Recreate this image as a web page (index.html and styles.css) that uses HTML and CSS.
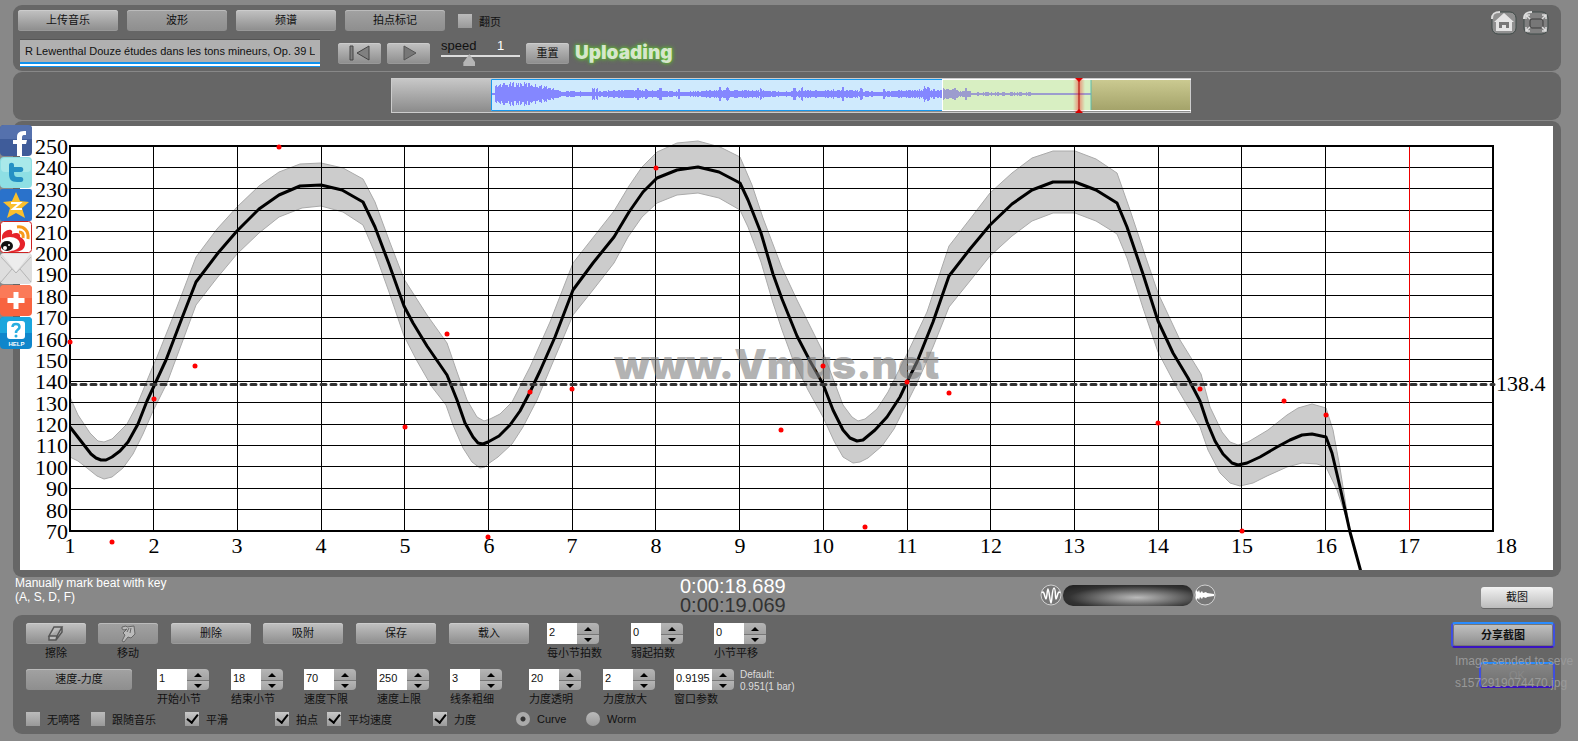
FILE: index.html
```html
<!DOCTYPE html>
<html lang="zh-CN">
	<head>
		<meta charset="utf-8">
		<title>Vmus.net</title>
		<link rel="stylesheet" href="styles.css">
	</head>
	<body>
		<!-- 分享栏 -->
		<nav class="share">
			<a href="#" aria-label="Facebook"><svg viewBox="0 0 32 32"><rect width="32" height="31" rx="4" fill="#3f5c9a"/><path d="M0 4a4 4 0 0 1 4-4h24a4 4 0 0 1 4 4v10H0z" fill="#5571ad"/><path d="M17 31V19h-4v-4h4v-3c0-5 3-6 9-6v4c-4 0-4 0-4 5h5l-1 4h-4v12z" fill="#fff"/></svg></a>
			<a href="#" aria-label="Twitter"><svg viewBox="0 0 32 32"><rect width="32" height="31" rx="4" fill="#8edfe4"/><rect x="1" y="1" width="30" height="14" rx="4" fill="#a9e9ea"/><path d="M9 8c0-3 5-3 5 0v2h7c3 0 3 5 0 5h-7c0 4 1 5 4 5h3c3 0 3 5 0 5h-4c-6 0-8-3-8-8z" fill="#2590c4"/></svg></a>
			<a href="#" aria-label="Qzone"><svg viewBox="0 0 32 32"><rect width="32" height="32" rx="2" fill="#2a72cb"/><path d="M16 3l4 9 9 1-7 6 3 10-9-5-9 5 3-10-7-6 9-1z" fill="#fbc02d"/><path d="M11 14h9l-7 6h9" fill="none" stroke="#fff" stroke-width="2"/></svg></a>
			<a href="#" aria-label="Weibo"><svg viewBox="0 0 32 32"><rect x="0.500" y="0.500" width="31" height="31" rx="3" fill="#fff" stroke="#c22"/><path d="M2 16C2 11 8 8 11 9c2 1 1 3 1 4 4-2 9-1 8 3 7 3 6 10 2 13-5 3-16 3-20-3z" fill="#e6232a"/><ellipse cx="10" cy="23" rx="10" ry="7" fill="#fff"/><ellipse cx="7" cy="25" rx="6" ry="5" fill="#111"/><circle cx="5" cy="27" r="2" fill="#fff"/><circle cx="9" cy="24" r="1" fill="#fff"/><path d="M17 6c7-1 12 4 11 12M19 11c3 0 5 2 4 6" fill="none" stroke="#f79a1c" stroke-width="3"/></svg></a>
			<a href="#" aria-label="Mail"><svg viewBox="0 0 32 32"><rect width="32" height="31" rx="4" fill="#dedede"/><path d="M2 1h28L16 19z" fill="#ededed"/><path d="M1 4L16 20 31 4M1 29l11-13M31 29L20 16" fill="none" stroke="#b5b5b5" stroke-width="1"/></svg></a>
			<a href="#" aria-label="More"><svg viewBox="0 0 32 32"><rect width="32" height="31" rx="4" fill="#f8633f"/><path d="M0 4a4 4 0 0 1 4-4h24a4 4 0 0 1 4 4v9H0z" fill="#fb7a58"/><path d="M13.500 7h5v6h6v5h-6v6h-5v-6h-6v-5h6z" fill="#fff"/></svg></a>
			<a href="#" aria-label="Help"><svg viewBox="0 0 32 32"><rect width="32" height="32" rx="4" fill="#0f86cb"/><path d="M0 4a4 4 0 0 1 4-4h24a4 4 0 0 1 4 4v12H0z" fill="#1aa6dd"/><rect x="7" y="4" width="18" height="18" rx="3" fill="#fff"/><path d="M12.500 10c0-4 7-4 7 0 0 3-3.500 2-3.500 6" fill="none" stroke="#28aee0" stroke-width="2.500"/><circle cx="16" cy="19" r="1.500" fill="#28aee0"/><text x="16.500" y="29" class="help-text">HELP</text></svg></a>
		</nav>

		<main class="page">
			<!-- 顶部工具栏 -->
			<header class="panel top">
				<div class="top-left">
					<div class="row">
						<button class="btn tab">上传音乐</button>
						<button class="btn tab on">波形</button>
						<button class="btn tab">频谱</button>
						<button class="btn tab on">拍点标记</button>
						<label class="tick flip"><input type="checkbox">翻页</label>
					</div>
					<div class="row player">
						<input class="track" type="text" aria-label="曲目" value="R Lewenthal Douze études dans les tons mineurs, Op. 39 Le festin">
						<button class="btn play" aria-label="回到开头"><svg width="24" height="16" viewBox="0 0 24 16"><path d="M2 1h3v14H2zM21 1v14L9 8z" fill="#808080" stroke="#444" stroke-width="1"/></svg></button>
						<button class="btn play" aria-label="播放"><svg width="24" height="16" viewBox="0 0 24 16"><path d="M7 1v14l12-7z" fill="#777" stroke="#555" stroke-width="1"/></svg></button>
						<div class="speed">
							<label for="speed">speed</label><output for="speed">1</output>
							<input id="speed" type="range" min="0" max="3" step="0.1" value="1">
						</div>
						<button class="btn reset">重置</button>
						<span class="uploading">Uploading</span>
					</div>
				</div>
				<div class="top-right">
					<button class="icon-btn" aria-label="首页"><svg width="26" height="24" viewBox="0 0 26 24"><rect x="1" y="1" width="24" height="22" rx="6" fill="#909090" stroke="#3f4a48"/><path d="M1 8c0-5 2-7 8-7" fill="none" stroke="#ddd" stroke-width="2"/><path d="M13 2l10 9h-2v9H5v-9H3z" fill="#e4e4e4"/><path d="M8 11h10v6h-3v-3h-4v3H8z" fill="#777"/></svg></button>
					<button class="icon-btn" aria-label="全屏"><svg width="26" height="24" viewBox="0 0 26 24"><rect x="1" y="1" width="24" height="22" rx="6" fill="#808080" stroke="#3f4a48"/><path d="M1 8c0-5 2-7 8-7" fill="none" stroke="#ddd" stroke-width="2"/><rect x="7" y="8" width="13" height="9" rx="2" fill="#777" stroke="#3c3c3c"/><path d="M3 8V4h4M3 4l4 4M19 4h4v4M23 4l-4 4M3 16v4h4M3 20l4-4M23 16v4h-4M23 20l-4-4" fill="none" stroke="#ddd" stroke-width="1.500"/></svg></button>
				</div>
			</header>

			<!-- 波形 -->
			<section class="panel wave">
				<svg id="wave" width="800" height="35" viewBox="0 0 800 35">
					<defs>
						<linearGradient id="gray" x1="0" y1="0" x2="0" y2="1"><stop offset="0" stop-color="#c8c8c8"/><stop offset="1" stop-color="#8a8a8a"/></linearGradient>
						<linearGradient id="olive" x1="0" y1="0" x2="0" y2="1"><stop offset="0" stop-color="#cccb92"/><stop offset="1" stop-color="#a3a269"/></linearGradient>
						<linearGradient id="glow"><stop offset="0" stop-color="#f00" stop-opacity="0"/><stop offset="0.500" stop-color="#f00" stop-opacity="0.400"/><stop offset="1" stop-color="#f00" stop-opacity="0"/></linearGradient>
					</defs>
					<rect x="0.500" y="0.500" width="799" height="34" fill="url(#gray)" stroke="#ccc"/>
					<rect x="100" y="1" width="451" height="32" fill="#cfeafd"/>
					<rect x="551" y="1" width="149" height="32" fill="#d8efc2"/>
					<rect x="700" y="1" width="99" height="32" fill="url(#olive)"/>
					<path id="wave-shape" fill="#8487ff"/>
					<path id="wave-tail" fill="#9c9cce"/>
					<path d="M551 1.500H100.500v31H551" fill="none" stroke="#1797ec"/>
					<path d="M551.500 1v32M551 1.500h249M551 32.500h249" fill="none" stroke="#fff"/>
					<path d="M700 2v30" stroke="#5bbcae"/>
					<rect x="682" y="1" width="12" height="33" fill="url(#glow)"/>
					<path d="M688 1v33" stroke="#a00" stroke-width="1"/>
					<path d="M684 0h8l-4 4zM684 35h8l-4-4z" fill="#d00"/>
				</svg>
			</section>

			<!-- 速度曲线 -->
			<section class="panel graph">
				<svg id="chart" class="chart" viewBox="20 126 1533 444"></svg>
			</section>

			<!-- 时间和缩放 -->
			<section class="strip">
				<p class="hint">Manually mark beat with key<br>(A, S, D, F)</p>
				<div class="times"><time class="now">0:00:18.689</time><time class="total">0:00:19.069</time></div>
				<div class="zoom">
					<svg width="22" height="24" viewBox="0 0 22 24"><circle cx="11" cy="12" r="10" fill="#777" stroke="#d0d0d0"/><path d="M2 10c2-4 3 6 4 6S7 6 8 6s2 14 3 14S12 5 14 5s1 11 2 11 2-10 4-6" fill="none" stroke="#fff" stroke-width="1.500"/></svg>
					<span class="zoom-bar"></span>
					<svg width="22" height="24" viewBox="0 0 22 24"><circle cx="11" cy="12" r="10" fill="#777" stroke="#d0d0d0"/><path d="M2 7l2 2 1-2 1 3 2-2 1 2 3-1 1 1 7 1v2l-7 1-1 1-3-1-1 2-2-2-1 3-1-2-2 2z" fill="#fff"/></svg>
				</div>
				<button class="btn light shot">截图</button>
			</section>

			<!-- 控制面板 -->
			<section class="panel controls">
				<div class="grid tools">
					<div class="field"><button class="btn small" id="erase" aria-label="擦除"><svg width="18" height="16" viewBox="0 0 18 16"><path d="M7 1h8l-5 9H2zM2 10v4h7l6-8V1M10 10l-1 4" fill="#bbb" stroke="#555" stroke-width="1.500"/></svg></button><label class="mid" for="erase">擦除</label></div>
					<div class="field"><button class="btn small on" id="move" aria-label="移动"><svg width="18" height="18" viewBox="0 0 18 18"><path d="M3 2l4-1 1 1 7-1 1 8-4 4-3-1-4 5-2-1 3-6-2-2 4-4-3 1-2-1z" fill="#bbb" stroke="#666" stroke-width="1"/><path d="M8 7l2-4M11 8l1-5" stroke="#666"/></svg></button><label class="mid" for="move">移动</label></div>
					<button class="btn wide">删除</button>
					<button class="btn wide">吸附</button>
					<button class="btn wide">保存</button>
					<button class="btn wide">载入</button>
					<div class="field"><span class="spin"><input id="beats" type="text" value="2"><button class="up" aria-label="加"></button><button class="down" aria-label="减"></button></span><label for="beats">每小节拍数</label></div>
					<div class="field"><span class="spin"><input id="pickup" type="text" value="0"><button class="up" aria-label="加"></button><button class="down" aria-label="减"></button></span><label for="pickup">弱起拍数</label></div>
					<div class="field"><span class="spin"><input id="shift" type="text" value="0"><button class="up" aria-label="加"></button><button class="down" aria-label="减"></button></span><label for="shift">小节平移</label></div>
				</div>
				<div class="grid params">
					<button class="btn mode on">速度-力度</button>
					<div class="field"><span class="spin"><input id="from" type="text" value="1"><button class="up" aria-label="加"></button><button class="down" aria-label="减"></button></span><label for="from">开始小节</label></div>
					<div class="field"><span class="spin"><input id="to" type="text" value="18"><button class="up" aria-label="加"></button><button class="down" aria-label="减"></button></span><label for="to">结束小节</label></div>
					<div class="field"><span class="spin"><input id="low" type="text" value="70"><button class="up" aria-label="加"></button><button class="down" aria-label="减"></button></span><label for="low">速度下限</label></div>
					<div class="field"><span class="spin"><input id="high" type="text" value="250"><button class="up" aria-label="加"></button><button class="down" aria-label="减"></button></span><label for="high">速度上限</label></div>
					<div class="field"><span class="spin"><input id="line" type="text" value="3"><button class="up" aria-label="加"></button><button class="down" aria-label="减"></button></span><label for="line">线条粗细</label></div>
					<div class="field"><span class="spin"><input id="alpha" type="text" value="20"><button class="up" aria-label="加"></button><button class="down" aria-label="减"></button></span><label for="alpha">力度透明</label></div>
					<div class="field"><span class="spin"><input id="scale" type="text" value="2"><button class="up" aria-label="加"></button><button class="down" aria-label="减"></button></span><label for="scale">力度放大</label></div>
					<div class="field"><span class="spin long"><input id="window" type="text" value="0.9195"><button class="up" aria-label="加"></button><button class="down" aria-label="减"></button></span><label for="window">窗口参数</label></div>
					<p class="default">Default:<br>0.951(1 bar)</p>
				</div>
				<div class="grid options">
					<label class="tick"><input type="checkbox">无嘀嗒</label>
					<label class="tick"><input type="checkbox">跟随音乐</label>
					<label class="tick"><input type="checkbox" checked>平滑</label>
					<label class="tick"><input type="checkbox" checked>拍点</label>
					<label class="tick"><input type="checkbox" checked>平均速度</label>
					<label class="tick"><input type="checkbox" checked>力度</label>
					<label class="tick"><input type="radio" name="view" checked>Curve</label>
					<label class="tick"><input type="radio" name="view">Worm</label>
				</div>

				<div class="send">
					<button class="btn focus send-btn">分享截图</button>
					<button class="btn focus ok-btn">OK</button>
					<p class="message">Image sended to seve<br>s1572919074470.jpg</p>
				</div>
			</section>
		</main>
		<script src="chart.js"></script>
	</body>
</html>
```
FILE: styles.css
```css
* {
	box-sizing: border-box;
}

body {
	position: relative;
	margin: 0;
	min-height: 100vh;
	overflow: hidden;
	background-color: #888;
	color: #111;
	font-family: "Liberation Sans", "Noto Sans CJK SC", sans-serif;
	font-size: 11px;
}

p {
	margin: 0;
}

button,
input {
	margin: 0;
	padding: 0;
	font-family: inherit;
	font-size: 11px;
}

.page {
	display: flex;
	flex-direction: column;
	gap: 1px;
	padding: 5px 17px 7px 13px;
}

.panel {
	background-color: #666;
	border-radius: 9px;
}

/* 按钮 */
.btn {
	display: flex;
	align-items: center;
	justify-content: center;
	height: 21px;
	border: 0;
	border-radius: 3px;
	background: linear-gradient(#c2c2c2, #8c8c8c);
	box-shadow: inset 0 1px #ccc, inset 0 -1px #999;
	color: #111;
	line-height: 21px;
}

.btn.on {
	background: linear-gradient(#a2a2a2, #8e8e8e);
	box-shadow: inset 0 1px #bbb;
}

.btn.light {
	background: linear-gradient(#f2f2f2, #bcbcbc);
	box-shadow: 0 1px #666;
}

/* 分享栏 */
.share {
	position: absolute;
	left: 0;
	top: 125px;
	z-index: 2;
	width: 32px;
}

.share a,
.share svg {
	display: block;
	width: 32px;
	height: 32px;
}

.help-text {
	fill: #fff;
	font-size: 6px;
	font-weight: bold;
	text-anchor: middle;
}

/* 顶部 */
.top {
	display: flex;
	justify-content: space-between;
	height: 66px;
	padding: 5px 12px 0 5px;
}

.row {
	display: flex;
	align-items: center;
	gap: 9px;
}

.tab {
	width: 100px;
}

.flip {
	margin-left: 4px;
}

.player {
	gap: 6px;
	margin-top: 7px;
	padding-left: 2px;
	height: 30px;
}

.track {
	width: 300px;
	height: 28px;
	margin-right: 12px;
	padding: 0 5px 5px;
	border: 0;
	border-top: 1px solid #555;
	background: linear-gradient(#b0b0b0 22px, #0f92ee 22px, #0f92ee 24px, #fff 24px, #fff 26px, #0f92ee 26px);
	color: #111;
}

.play,
.reset {
	width: 43px;
}

.speed {
	display: grid;
	grid-template-columns: 56px auto;
	width: 79px;
	margin-left: 5px;
	font-size: 13px;
	line-height: 14px;
}

.speed output {
	color: #fff;
}

.speed input {
	grid-column: 1 / 3;
	width: 79px;
	height: 14px;
	background: none;
	appearance: none;
}

.speed input::-webkit-slider-runnable-track {
	height: 14px;
	background: linear-gradient(#ddd, #ddd) 0 2px / 100% 2px no-repeat;
}

.speed input::-webkit-slider-thumb {
	appearance: none;
	width: 12px;
	height: 12px;
	margin-top: 1px;
	background: #b5b5b5;
	clip-path: polygon(50% 0, 100% 70%, 100% 100%, 0 100%, 0 70%);
}

.uploading {
	color: #d6e6cc;
	font-family: Inter, sans-serif;
	font-size: 19px;
	font-weight: 900;
	line-height: 24px;
	text-shadow: 0 0 3px #5cbf2c, 0 0 5px #5cbf2c;
}

.top-right {
	display: flex;
	gap: 6px;
	padding-top: 1px;
}

.icon-btn {
	width: 26px;
	height: 24px;
	border: 0;
	background: none;
}

.icon-btn svg {
	display: block;
}

/* 波形和曲线 */
.wave {
	display: flex;
	justify-content: center;
	height: 48px;
	padding: 6px 0 0 8px;
}

.graph {
	padding: 5px 8px 7px 7px;
}

.chart {
	display: block;
	width: 100%;
	height: auto;
	background-color: #fff;
	font-family: "Liberation Serif", serif;
	font-size: 22px;
}

.band {
	fill: #ccc;
	stroke: #aaa;
}

.grid-line {
	stroke: #000;
	shape-rendering: crispEdges;
}

.frame {
	fill: none;
	stroke: #000;
	stroke-width: 2;
}

.now-line {
	stroke: #e00;
	shape-rendering: crispEdges;
}

.curve {
	fill: none;
	stroke: #000;
	stroke-width: 3;
	stroke-linejoin: round;
}

.average {
	stroke: #333;
	stroke-width: 3;
	stroke-dasharray: 5 5;
	stroke-linecap: round;
}

.beat {
	fill: #f00;
}

.watermark {
	fill: #808080;
	fill-opacity: 0.6;
	font-family: Inter, sans-serif;
	font-size: 41px;
	font-weight: 900;
}

.y-text {
	text-anchor: end;
}

.x-text {
	text-anchor: middle;
}

/* 时间和缩放 */
.strip {
	display: grid;
	grid-template-columns: 665px 360px 1fr auto;
	height: 36px;
	padding: 0 8px 0 2px;
	color: #fff;
}

.hint {
	margin-top: -2px;
	font-size: 12px;
	line-height: 14px;
}

.times {
	margin-top: -1px;
	font-size: 20px;
	line-height: 19px;
}

.times time {
	display: block;
}

.total {
	color: #333;
}

.zoom {
	display: flex;
	align-items: center;
	gap: 1px;
	height: 34px;
}

.zoom-bar {
	width: 130px;
	height: 21px;
	border-radius: 10px;
	background: radial-gradient(ellipse at 57% 60%, #bbb, #888 25%, #333 65%, #1c1c1c);
}

.shot {
	width: 72px;
	margin-top: 9px;
}

/* 控制面板 */
.controls {
	position: relative;
	height: 119px;
	padding: 8px 13px 0;
}

.grid {
	display: grid;
	align-items: start;
}

.tools {
	grid-template-columns: 72px 73px 92px 93px 93px 98px 84px 83px auto;
	height: 46px;
}

.params {
	grid-template-columns: 131px 74px repeat(3, 73px) 79px 74px 71px 66px auto;
	height: 42px;
}

.options {
	grid-template-columns: 65px 94px 90px 52px 106px 83px 70px auto;
	height: 16px;
}

.field {
	display: flex;
	flex-direction: column;
	align-items: flex-start;
}

.field label {
	line-height: 18px;
}

.field .mid {
	width: 60px;
	text-align: center;
}

.small {
	width: 60px;
}

.wide {
	width: 80px;
}

.mode {
	width: 106px;
}

.spin {
	display: grid;
	grid-template-columns: 30px 22px;
	grid-template-rows: 11px 10px;
}

.spin.long {
	grid-template-columns: 38px 22px;
}

.spin input {
	grid-row: 1 / 3;
	width: 100%;
	height: 21px;
	padding: 0 0 4px 2px;
	border: 0;
	background-color: #fff;
	color: #111;
}

.spin button {
	display: flex;
	align-items: center;
	justify-content: center;
	border: 0;
	background: linear-gradient(#b5b5b5, #a2a2a2);
	border-radius: 0 4px 0 0;
}

.spin .down {
	border-top: 1px solid #777;
	border-radius: 0 0 4px 0;
}

.spin button::before {
	content: "";
	border: 4px solid transparent;
	border-top-width: 0;
	border-bottom-color: #000;
}

.spin .down::before {
	border-width: 4px 4px 0;
	border-top-color: #000;
}

.default {
	color: #ddd;
	font-size: 10px;
	line-height: 12px;
}

.tick {
	display: flex;
	align-items: center;
	gap: 7px;
	height: 16px;
	white-space: nowrap;
}

.tick input {
	width: 14px;
	height: 14px;
	appearance: none;
	background: linear-gradient(#bbb, #999);
}

.tick input[type="checkbox"]:checked {
	position: relative;
	background: linear-gradient(#c8c8c8, #999);
}

.tick input[type="checkbox"]:checked::after {
	content: "";
	position: absolute;
	left: 4px;
	top: 0;
	width: 5px;
	height: 9px;
	border: solid #000;
	border-width: 0 2px 2px 0;
	transform: rotate(38deg);
}

.tick input[type="radio"] {
	border-radius: 50%;
}

.tick input[type="radio"]:checked {
	background: radial-gradient(circle, #333 2px, #aaa 3px);
}

/* 提示信息浮在按钮上面 */
.send {
	position: absolute;
	top: 7px;
	right: 6px;
	display: flex;
	flex-direction: column;
	align-items: flex-end;
	gap: 14px;
	width: 104px;
}

.focus {
	height: 26px;
	border: 2px solid;
	border-color: #2a8cff #3f4fe0 #3a14c0;
	border-radius: 4px;
	box-shadow: inset 0 0 0 1px #777;
}

.send-btn {
	width: 104px;
	font-weight: bold;
}

.ok-btn {
	width: 76px;
	background: linear-gradient(#858585, #707070);
	color: #888;
}

.message {
	position: absolute;
	left: 4px;
	top: 28px;
	color: #999;
	font-size: 12px;
	line-height: 22px;
	white-space: nowrap;
}
```
FILE: chart.js
```js
var NS = 'http://www.w3.org/2000/svg';
var chart = document.getElementById('chart');

var LEFT = 70, TOP = 146, RIGHT = 1493, BOTTOM = 531;
var BAR = (RIGHT - LEFT) / 17;
var STEP = (BOTTOM - TOP) / 18;

function add(tag, attrs, text) {
	var el = document.createElementNS(NS, tag);
	for (var key in attrs) {
		el.setAttribute(key, attrs[key]);
	}
	if (text !== undefined) {
		el.textContent = text;
	}
	chart.appendChild(el);
}

function line(cls, x1, y1, x2, y2) {
	add('line', { 'class': cls, x1: x1, y1: y1, x2: x2, y2: y2 });
}

// 力度带的上下边界
var upper = '70,397 78,415 90,433 98,441 104,442 112,439 127,424 137,405 153,366 157,357 177,307 196,257 217,229 237,207 259,186 279,172 300,164 321,163 343,168 363,179 375,202 389,240 404,279 427,315 447,343 457,372 467,400 477,417 484,421 490,419 500,414 512,402 530,367 550,322 573,263 614,211 629,186 642,167 657,152 677,143 698,141 720,147 740,157 752,185 763,218 782,268 797,300 823,352 843,405 852,417 858,421 865,419 877,409 888,392 907,354 927,312 949,246 970,219 990,193 1012,173 1032,158 1053,151 1075,151 1096,159 1117,173 1130,210 1145,255 1158,293 1180,340 1201,374 1210,407 1222,432 1230,442 1238,445 1248,442 1268,430 1287,415 1298,408 1312,404 1326,408 1333,430 1340,468 1350,531';
var lower = '70,457 78,461 87,468 97,476 104,479 112,477 123,468 133,454 143,434 153,411 167,383 183,340 196,305 217,278 237,254 259,233 279,217 302,208 321,206 343,212 363,225 375,253 389,292 404,336 417,361 432,387 446,405 453,425 463,448 472,462 480,468 485,467 488,464 498,457 512,444 523,427 537,400 553,362 573,315 593,290 614,263 628,237 642,217 657,203 677,195 698,193 719,198 740,210 748,227 761,262 773,303 782,330 793,360 808,390 823,417 834,441 843,457 853,463 860,462 868,458 882,446 894,429 900,417 917,383 933,347 949,307 970,281 990,256 1012,236 1032,221 1053,213 1075,213 1096,221 1117,234 1127,258 1143,308 1158,352 1177,388 1200,427 1208,450 1220,473 1230,483 1240,486 1253,483 1267,476 1287,467 1302,463 1317,464 1326,467 1337,490 1347,520 1350,531';
var curve = '70,427 77,436 84,445 91,454 96,458 101,460 106,460 112,457 120,451 128,442 138,424 147,401 154,386 166,360 182,318 196,282 218,253 237,231 259,209 279,195 300,186 321,185 342,190 363,202 375,227 389,264 404,306 413,323 427,346 447,375 457,400 465,423 473,437 478,443 483,444 488,442 499,436 510,425 520,411 530,392 540,371 555,337 573,290 593,263 614,237 629,212 643,192 657,178 677,170 698,167 719,172 740,183 748,200 761,233 773,274 782,299 797,336 810,361 823,384 833,410 843,430 850,438 857,441 863,440 875,430 887,417 900,397 907,382 917,362 933,322 949,276 970,249 990,225 1012,204 1032,190 1053,182 1075,182 1096,190 1117,203 1127,227 1143,274 1158,321 1173,353 1188,378 1200,401 1207,422 1215,441 1223,454 1232,463 1238,465 1247,463 1260,457 1277,447 1290,440 1302,435 1312,434 1326,437 1332,453 1340,487 1350,532 1361,572';
var beats = [[70, 342], [112, 542], [154, 399], [195, 366], [279, 147], [405, 427], [447, 334], [488, 537], [530, 392], [572, 389], [656, 168], [781, 430], [823, 366], [865, 527], [907, 382], [949, 393], [1158, 423], [1200, 389], [1242, 531], [1284, 401], [1326, 415]];

add('polygon', { 'class': 'band', points: upper + ' ' + lower.split(' ').reverse().join(' ') });

// 网格
for (var i = 1; i < 18; i++) {
	var y = Math.floor(TOP + STEP * i) + 0.5;
	line('grid-line', LEFT, y, RIGHT, y);
}
for (i = 1; i < 17; i++) {
	var x = Math.floor(LEFT + BAR * i) + 0.5;
	line(i === 16 ? 'now-line' : 'grid-line', x, TOP, x, BOTTOM);
}
add('rect', { 'class': 'frame', x: LEFT, y: TOP, width: RIGHT - LEFT, height: BOTTOM - TOP });
add('polyline', { 'class': 'curve', points: curve });
line('average', 71, 384.5, 1494, 384.5);

add('text', { 'class': 'watermark', x: 614, y: 379 }, 'www.Vmus.net');

beats.forEach(function (b) {
	add('circle', { 'class': 'beat', cx: b[0], cy: b[1], r: 2.5 });
});

// 坐标文字
for (i = 0; i <= 18; i++) {
	add('text', { 'class': 'y-text', x: 68, y: Math.round(TOP + STEP * i) + 8 }, 250 - i * 10);
}
for (i = 0; i < 18; i++) {
	add('text', { 'class': 'x-text', x: LEFT + Math.round(BAR * i) + (i === 17 ? 13 : 0), y: 553 }, i + 1);
}
add('text', { x: 1496, y: 391 }, '138.4');

// 波形：包络加上一点固定的抖动
function envelope(x) {
	if (x < 104) return 1;
	if (x < 150) return 8 + 2 * Math.sin((x - 104) / 15);
	if (x < 175) return 8 - (x - 150) / 4;
	if (x < 551) return 2 + 2 * Math.abs(Math.sin(x / 31));
	if (x < 566) return 5;
	if (x < 580) return 3;
	if (x < 640) return 1.5;
	return 1;
}
function wavePath(from, to) {
	var d = '';
	for (var x = from; x < to; x++) {
		var noise = Math.abs(Math.sin(x * 12.9898) * 43758.5453) % 1;
		var peak = (x > 175 && x < 580 && (x % 41 < 2 || x % 67 < 3)) ? 3 : 0;
		var h = Math.max(1, Math.round(envelope(x) * (0.7 + noise * 0.5) + peak));
		d += 'M' + x + ' ' + (16 - h) + 'h1v' + h * 2 + 'h-1z';
	}
	return d;
}
document.getElementById('wave-shape').setAttribute('d', wavePath(101, 551));
document.getElementById('wave-tail').setAttribute('d', wavePath(552, 700));
```
